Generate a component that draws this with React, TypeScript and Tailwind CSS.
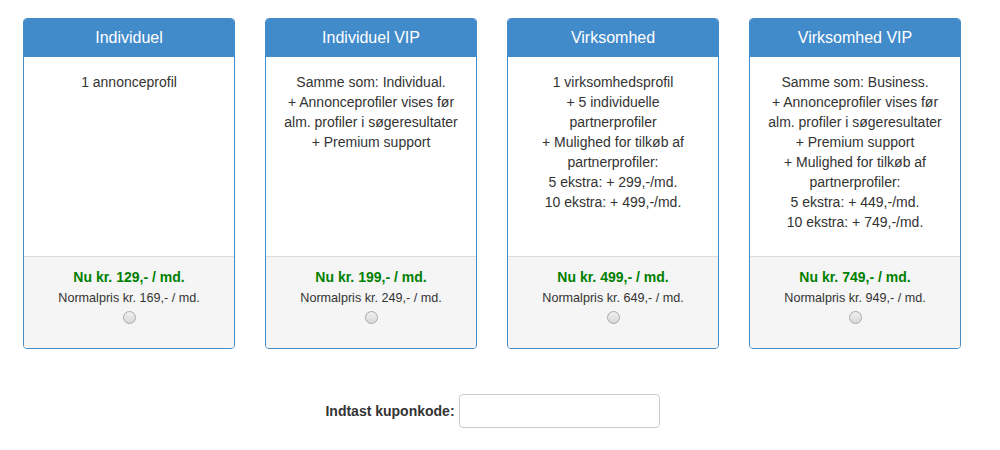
import React from "react";

const plans = [
  {
    title: "Individuel",
    lines: ["1 annonceprofil"],
    now: "Nu kr. 129,- / md.",
    normal: "Normalpris kr. 169,- / md.",
  },
  {
    title: "Individuel VIP",
    lines: [
      "Samme som: Individual.",
      "+ Annonceprofiler vises før alm. profiler i søgeresultater",
      "+ Premium support",
    ],
    now: "Nu kr. 199,- / md.",
    normal: "Normalpris kr. 249,- / md.",
  },
  {
    title: "Virksomhed",
    lines: [
      "1 virksomhedsprofil",
      "+ 5 individuelle partnerprofiler",
      "+ Mulighed for tilkøb af partnerprofiler:",
      "5 ekstra: + 299,-/md.",
      "10 ekstra: + 499,-/md.",
    ],
    now: "Nu kr. 499,- / md.",
    normal: "Normalpris kr. 649,- / md.",
  },
  {
    title: "Virksomhed VIP",
    lines: [
      "Samme som: Business.",
      "+ Annonceprofiler vises før alm. profiler i søgeresultater",
      "+ Premium support",
      "+ Mulighed for tilkøb af partnerprofiler:",
      "5 ekstra: + 449,-/md.",
      "10 ekstra: + 749,-/md.",
    ],
    now: "Nu kr. 749,- / md.",
    normal: "Normalpris kr. 949,- / md.",
  },
];

export default function App() {
  return (
    <div
      className="w-[1000px] h-[450px] bg-white text-[#333333] text-[14px] leading-[20px]"
      style={{ fontFamily: '"Liberation Sans", Arial, sans-serif' }}
    >
      <div className="flex gap-[30px] pl-[23px] pt-[18px]">
        {plans.map((p) => (
          <div
            key={p.title}
            className="w-[212px] h-[331px] flex flex-col border border-[#428bca] rounded-[4px] overflow-hidden"
          >
            <div className="h-[38px] bg-[#428bca] text-white text-[16px] flex items-center justify-center">
              {p.title}
            </div>
            <div className="h-[199px] bg-white px-[15px] pt-[15px] text-center">
              {p.lines.map((l, i) => (
                <div key={i}>{l}</div>
              ))}
            </div>
            <div className="flex-1 bg-[#f5f5f5] border-t border-[#dddddd] pt-[10px] text-center text-[12.6px] leading-[20px]">
              <div className="font-bold text-[#008000] text-[14px]">{p.now}</div>
              <div className="leading-[22px]">{p.normal}</div>
              <div className="flex justify-center mt-[2px]">
                <span className="w-[13px] h-[13px] rounded-full border border-[#a9a9a9] bg-gradient-to-b from-[#f0f0f0] to-[#d8d8d8]" />
              </div>
            </div>
          </div>
        ))}
      </div>
      <div className="flex items-center justify-center mt-[45px] gap-[4px] pr-[15px]">
        <label className="font-bold text-[14px]">Indtast kuponkode:</label>
        <input
          type="text"
          className="w-[201px] h-[34px] border border-[#cccccc] rounded-[4px] px-3 outline-none"
        />
      </div>
    </div>
  );
}
